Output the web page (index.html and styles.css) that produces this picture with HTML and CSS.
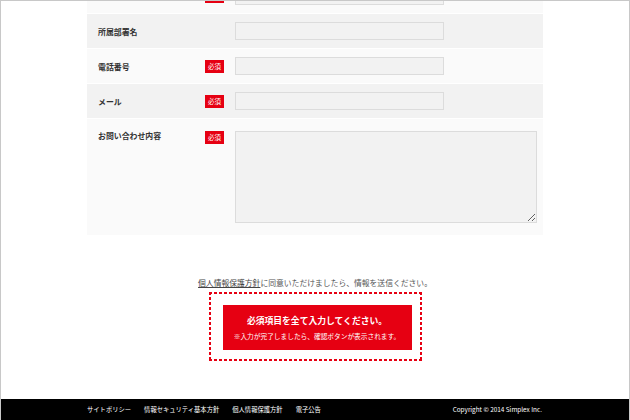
FILE: index.html
```html
<!DOCTYPE html>
<html lang="ja">
<head>
    <title>お問い合わせ</title>
    <meta charset="utf-8">
    <meta name="viewport" content="width=device-width, initial-scale=1">
    <link rel="stylesheet" href="styles.css">
</head>
<body>
    <div class="frame">
        <main class="content">
            <div class="form">
                <!-- row scrolled above the top edge, only its bottom shows -->
                <div class="form-row">
                    <div class="form-label"></div>
                    <span class="required"></span>
                    <input class="text-input" type="text">
                </div>
                <div class="form-row">
                    <div class="form-label">所属部署名</div>
                    <span></span>
                    <input class="text-input" type="text">
                </div>
                <div class="form-row">
                    <div class="form-label">電話番号</div>
                    <span class="required">必須</span>
                    <input class="text-input" type="text">
                </div>
                <div class="form-row">
                    <div class="form-label">メール</div>
                    <span class="required">必須</span>
                    <input class="text-input" type="text">
                </div>
                <div class="form-row form-row-top">
                    <div class="form-label">お問い合わせ内容</div>
                    <span class="required">必須</span>
                    <textarea class="text-area"></textarea>
                </div>
            </div>

            <p class="consent"><a href="#">個人情報保護方針</a>に同意いただけましたら、情報を送信ください。</p>

            <div class="submit-wrap">
                <div class="submit-box">
                    <strong class="submit-title">必須項目を全て入力してください。</strong>
                    <span class="submit-note">※入力が完了しましたら、確認ボタンが表示されます。</span>
                </div>
            </div>
        </main>

        <footer class="footer">
            <div class="footer-inner">
                <nav class="footer-links">
                    <a href="#">サイトポリシー</a>
                    <a href="#">情報セキュリティ基本方針</a>
                    <a href="#">個人情報保護方針</a>
                    <a href="#">電子公告</a>
                </nav>
                <div class="copyright">Copyright © 2014 Simplex Inc.</div>
            </div>
        </footer>
    </div>
</body>
</html>
```

FILE: styles.css
```css
body {
    margin: 0;
    width: 630px;
    height: 420px;
    font-family: "Noto Sans CJK JP", "Noto Sans", sans-serif;
    color: #333;
    background: #fff;
}

.frame {
    box-sizing: border-box;
    height: 420px;
    border: 1px solid #c8c8c8;
    border-bottom: none;
    display: flex;
    flex-direction: column;
    overflow: hidden;
}

.content {
    width: 456px;
    margin: 0 auto;
}

/* Form rows */
.form {
    margin-top: -22px;
    display: flex;
    flex-direction: column;
    gap: 1px;
}

.form-row {
    display: grid;
    grid-template-columns: 107px 30px 1fr;
    align-items: center;
    height: 34px;
    padding: 0 6px 0 11px;
    background: #fafafa;
}

.form-row:nth-child(even) {
    background: #f2f2f2;
}

.form-row-top {
    height: auto;
    align-items: start;
    padding-top: 12px;
    padding-bottom: 12px;
}

.form-label {
    font-size: 7.9px;
    line-height: 9px;
    font-weight: 700;
    color: #333;
}

.required {
    width: 19px;
    height: 13px;
    background: #e60012;
    color: #fff;
    font-size: 6.4px;
    line-height: 13px;
    text-align: center;
}

.text-input {
    box-sizing: border-box;
    width: 209px;
    height: 18px;
    margin: 0;
    border: 1px solid #dcdcdc;
    background: #f2f2f2;
}

.text-area {
    box-sizing: border-box;
    width: 100%;
    height: 92px;
    margin: 0;
    border: 1px solid #dcdcdc;
    background: #f2f2f2;
}

/* Consent and submit */
.consent {
    margin: 42px 0 0;
    font-size: 7.8px;
    line-height: 12px;
    text-align: center;
    color: #555;
}

.consent a {
    color: #444;
    text-decoration: underline;
}

/* short dashes drawn with gradients, finer than border: dashed */
.submit-wrap {
    box-sizing: border-box;
    width: 213px;
    margin: 3px auto 0;
    padding: 13px 10px 11px 14px;
    background:
        repeating-linear-gradient(90deg, #e60012 0 3px, transparent 3px 5px) top / 100% 2px no-repeat,
        repeating-linear-gradient(90deg, #e60012 0 3px, transparent 3px 5px) bottom / 100% 2px no-repeat,
        repeating-linear-gradient(180deg, #e60012 0 3px, transparent 3px 5px) left / 2px 100% no-repeat,
        repeating-linear-gradient(180deg, #e60012 0 3px, transparent 3px 5px) right / 2px 100% no-repeat;
}

.submit-box {
    height: 45px;
    box-sizing: border-box;
    padding-top: 10px;
    background: #e60012;
    color: #fff;
    text-align: center;
}

.submit-title {
    display: block;
    font-size: 8.8px;
    line-height: 12px;
    font-weight: 700;
}

.submit-note {
    display: block;
    margin-top: 4px;
    font-size: 6.7px;
    line-height: 10px;
}

/* Footer */
.footer {
    margin-top: auto;
    height: 21px;
    background: #000;
    color: #fff;
}

.footer-inner {
    width: 456px;
    height: 100%;
    margin: 0 auto;
    display: flex;
    justify-content: space-between;
    align-items: center;
}

.footer-links {
    display: flex;
    gap: 13px;
}

.footer-links a {
    color: #fff;
    text-decoration: none;
    font-size: 6.3px;
}

.copyright {
    font-size: 6.4px;
    padding-right: 1px;
}
```
